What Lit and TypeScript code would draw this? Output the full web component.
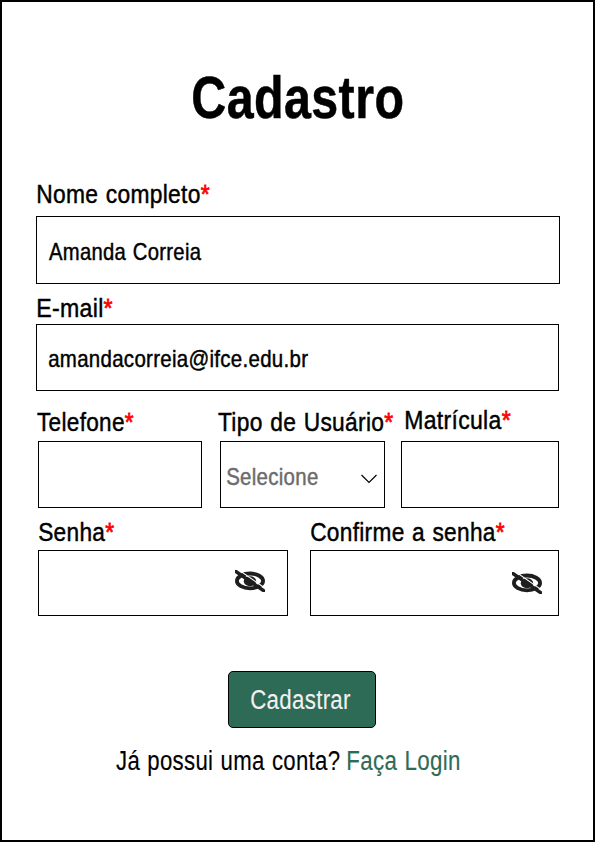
import { LitElement, html, css, svg } from "lit";
import { customElement, property } from "lit/decorators.js";

const FAMILY = '"Liberation Sans", Arial, sans-serif';
const ctx = document.createElement("canvas").getContext("2d")!;

/** One line of condensed text whose visible width is `width` pixels. */
@customElement("narrow-text")
class NarrowText extends LitElement {
  @property() text = "";
  @property({ type: Boolean }) required = false;
  @property({ type: Number }) width = 100;
  @property({ type: Number }) size = 26;
  @property({ type: Number }) weight = 400;
  @property({ type: Number }) thick = 0.45;
  @property({ type: Number }) spacing = 0.35;
  @property({ type: Number }) gap = 1;

  static styles = css`
    :host { display: block; flex: none; }
    svg { display: block; overflow: visible; }
    text {
      font-family: "Liberation Sans", Arial, sans-serif;
      fill: currentColor;
      stroke: currentColor;
      white-space: pre;
    }
    .star { fill: #f00; stroke: #f00; stroke-width: 0.8px; }
  `;

  render() {
    ctx.font = `${this.weight} ${this.size}px ${FAMILY}`;
    const m = ctx.measureText(this.text);
    const n = this.text.length;
    const words = this.text.split(" ").length - 1;
    let advance = m.width + n * this.spacing + words * this.gap;
    let ink = m.actualBoundingBoxLeft + m.actualBoundingBoxRight + (n - 1) * this.spacing + words * this.gap;
    if (this.required) {
      const s = ctx.measureText("*");
      ink = m.actualBoundingBoxLeft + advance + s.actualBoundingBoxRight;
      advance += s.width + this.spacing;
    }
    const k = this.width / ink;
    return html`<svg width=${this.width} height="30"><text x=${m.actualBoundingBoxLeft * k} y="24" font-size=${this.size}
        font-weight=${this.weight} stroke-width=${this.thick} letter-spacing=${this.spacing} word-spacing=${this.gap}
        textLength=${advance * k} lengthAdjust="spacingAndGlyphs">${this.text}${this.required ? svg`<tspan class="star">*</tspan>` : ""}</text></svg>`;
  }
}

const eyeOff = svg`<svg class="eye" width="30" height="22" viewBox="0 0 30 22">
  <path d="M15 3.5C22 3.5 28.1 7 28.1 10.9S22 18.3 15 18.3S1.9 14.8 1.9 10.9S8 3.5 15 3.5Z" fill="none" stroke="#1e1e1e" stroke-width="3.8"/>
  <ellipse cx="15" cy="11.2" rx="6.2" ry="5" fill="#1e1e1e"/>
  <path d="M3-.6L31 18.8" stroke="#fff" stroke-width="1.1"/>
  <path d="M-1 .2L31 22.3" stroke="#1e1e1e" stroke-width="3.5"/>
</svg>`;

@customElement("app-root")
class AppRoot extends LitElement {
  static styles = css`
    :host { display: block; }
    * { box-sizing: border-box; }
    .card {
      width: 595px; height: 842px; border: 2px solid #000; background: #fff;
      padding: 92px 0 0 34px; display: flex; flex-direction: column;
    }
    .title { margin-left: 156.5px; height: 85px; }
    .box { border: 1px solid #000; display: flex; background: #fff; }
    .name { width: 524px; height: 68px; padding: 19px 0 0 12px; margin: 7px 0 9px; }
    .mail { width: 523px; height: 67px; padding: 18px 0 0 11.5px; margin-top: 1px; }
    .lbl { margin-left: 1.7px; }
    .row { display: grid; align-items: start; }
    .three { grid-template-columns: 182px 181px 158px; margin: 16px 0 0 2px; }
    .two { grid-template-columns: 272px 249px; margin: 8.5px 0 0 2px; }
    .cell { display: flex; flex-direction: column; }
    .three .slot { height: 34px; margin-left: -1.3px; }
    .two .slot { height: 33.5px; margin-left: 1px; }
    .three .type { margin-left: -2.3px; }
    .three .reg { margin: -2px 0 2px 5.2px; }
    .phone { width: 164px; height: 67px; }
    .select { width: 165px; height: 67px; padding: 19px 0 0 5.5px; color: #6b6b6b; }
    .chev { margin: 12.5px 0 0 43px; }
    .regbox { width: 158px; height: 67px; }
    .pass { width: 250px; height: 66px; padding: 19px 22px 0 0; justify-content: flex-end; }
    .confirm { width: 249px; height: 66px; padding: 21px 16px 0 0; justify-content: flex-end; }
    .eye { display: block; overflow: hidden; }
    .btn {
      width: 148px; height: 57px; margin: 55px 0 0 192px; padding: 13px 0 0 22px;
      border: 1px solid #000; border-radius: 5px; background: #2e6b57; color: #f3f1f1;
      display: flex;
    }
    .foot { display: flex; gap: 8px; margin: 18px 0 0 80px; }
    .link { color: #2e6b57; }
  `;

  render() {
    return html`<div class="card">
      <narrow-text class="title" text="Cadastro" .width=${209.5} .size=${58.5} .weight=${700} .thick=${0.5} .spacing=${0.5}></narrow-text>
      <narrow-text class="lbl" required text="Nome completo" .width=${171.5}></narrow-text>
      <div class="box name"><narrow-text text="Amanda Correia" .width=${152.5} .size=${24}></narrow-text></div>
      <narrow-text class="lbl" required text="E-mail" .width=${74.5}></narrow-text>
      <div class="box mail"><narrow-text text="amandacorreia@ifce.edu.br" .width=${259} .size=${24}></narrow-text></div>
      <div class="row three">
        <div class="cell">
          <narrow-text class="slot" required text="Telefone" .width=${96.5}></narrow-text>
          <div class="box phone"></div>
        </div>
        <div class="cell">
          <narrow-text class="slot type" required text="Tipo de Usuário" .width=${175}></narrow-text>
          <div class="box select">
            <narrow-text text="Selecione" .width=${91} .size=${24}></narrow-text>
            <svg class="chev" width="16" height="10" viewBox="0 0 16 10"><path d="M.5 1L8 8.5L15.5 1" fill="none" stroke="#000" stroke-width="1.2"/></svg>
          </div>
        </div>
        <div class="cell">
          <narrow-text class="slot reg" required text="Matrícula" .width=${104.5}></narrow-text>
          <div class="box regbox"></div>
        </div>
      </div>
      <div class="row two">
        <div class="cell">
          <narrow-text class="slot" required text="Senha" .width=${75}></narrow-text>
          <div class="box pass">${eyeOff}</div>
        </div>
        <div class="cell">
          <narrow-text class="slot" required text="Confirme a senha" .width=${193.5}></narrow-text>
          <div class="box confirm">${eyeOff}</div>
        </div>
      </div>
      <div class="btn"><narrow-text text="Cadastrar" .width=${99.5} .size=${27} .thick=${0.1}></narrow-text></div>
      <div class="foot">
        <narrow-text text="Já possui uma conta?" .width=${224} .size=${27} .thick=${0.15}></narrow-text>
        <narrow-text class="link" text="Faça Login" .width=${111.5} .size=${27} .thick=${0.15}></narrow-text>
      </div>
    </div>`;
  }
}
